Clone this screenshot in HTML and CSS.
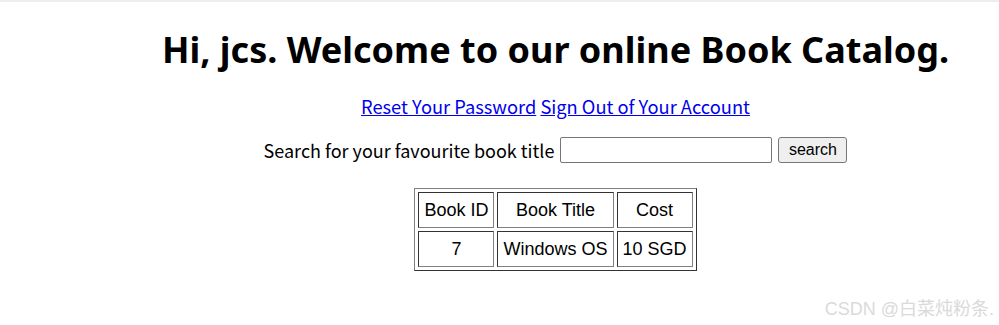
FILE: index.html
```html
<!DOCTYPE html>
<html lang="en">
  <head>
    <meta charset="UTF-8" />
    <title>Book Catalog</title>
    <link rel="stylesheet" href="styles.css">
  </head>
  <body>
    <div class="page">
      <h1>Hi, jcs. Welcome to our online Book Catalog.</h1>

      <p class="links">
        <a href="#">Reset Your Password</a>
        <a href="#">Sign Out of Your Account</a>
      </p>

      <form class="search">
        <label for="title">Search for your favourite book title</label>
        <input type="text" id="title" name="title" />
        <button type="submit">search</button>
      </form>

      <table class="books">
        <tr>
          <th>Book ID</th>
          <th>Book Title</th>
          <th>Cost</th>
        </tr>
        <tr>
          <td>7</td>
          <td>Windows OS</td>
          <td>10 SGD</td>
        </tr>
      </table>
    </div>

    <div class="mark">CSDN @白菜炖粉条.</div>
  </body>
</html>
```

FILE: styles.css
```css
html {
  border-top: 2px solid #eeeeee;
}
body {
  margin: 0;
  padding: 0 0 0 112px;
  font-family: "Noto Sans CJK SC", sans-serif;
  color: #000;
}
.page {
  text-align: center;
}
h1 {
  font-family: "Noto Sans", sans-serif;
  font-weight: bold;
  font-size: 36px;
  margin: 0;
  padding-top: 24px;
  line-height: 48px;
}
.links {
  margin: 20px 0 0;
  font-size: 18.3px;
  line-height: 24px;
}
.links a {
  color: #0000ee;
}
.search {
  margin-top: 19px;
  display: flex;
  justify-content: center;
  align-items: center;
  gap: 6px;
  font-size: 18px;
}
.search input {
  width: 206px;
  height: 20px;
  border: 1px solid #767676;
  border-radius: 2px;
  padding: 2px;
  margin: 0;
}
.search button {
  font-family: "Liberation Sans", Arial, sans-serif;
  font-size: 16px;
  height: 26px;
  width: 69px;
  padding: 0;
  border: 1px solid #767676;
  border-radius: 3px;
  background: #efefef;
}
.books {
  margin: 25px auto 0;
  font-family: "Liberation Sans", Arial, sans-serif;
  font-size: 18px;
  border: 1px solid;
  border-color: #808080 #333333 #333333 #808080;
  border-spacing: 3px;
}
.books th,
.books td {
  font-weight: normal;
  padding: 6px 5px;
  line-height: 22px;
  text-align: center;
  border: 1px solid;
  border-color: #333333 #808080 #808080 #333333;
}
.mark {
  position: absolute;
  right: 5px;
  top: 294px;
  font-family: "Liberation Sans", "Noto Sans CJK SC", sans-serif;
  font-size: 18px;
  color: #dadada;
}
```
